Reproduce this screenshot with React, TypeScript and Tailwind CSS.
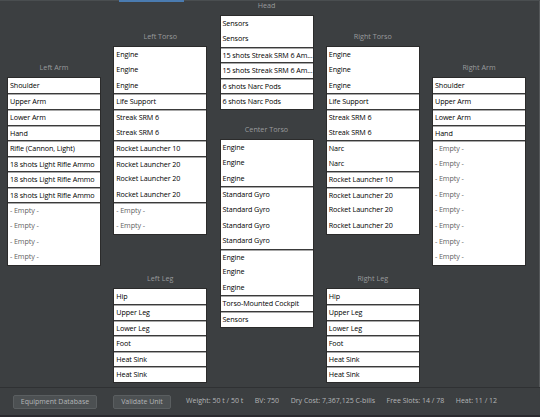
import React from "react";

type Groups = string[][];

const leftArm: Groups = [
  ["Shoulder"],
  ["Upper Arm"],
  ["Lower Arm"],
  ["Hand"],
  ["Rifle (Cannon, Light)"],
  ["18 shots Light Rifle Ammo"],
  ["18 shots Light Rifle Ammo"],
  ["18 shots Light Rifle Ammo"],
  ["- Empty -", "- Empty -", "- Empty -", "- Empty -"],
];

const leftTorso: Groups = [
  ["Engine", "Engine", "Engine"],
  ["Life Support"],
  ["Streak SRM 6", "Streak SRM 6"],
  ["Rocket Launcher 10"],
  ["Rocket Launcher 20", "Rocket Launcher 20", "Rocket Launcher 20"],
  ["- Empty -", "- Empty -"],
];

const head: Groups = [
  ["Sensors", "Sensors"],
  ["15 shots Streak SRM 6 Am..."],
  ["15 shots Streak SRM 6 Am..."],
  ["6 shots Narc Pods"],
  ["6 shots Narc Pods"],
];

const centerTorso: Groups = [
  ["Engine", "Engine", "Engine"],
  ["Standard Gyro", "Standard Gyro", "Standard Gyro", "Standard Gyro"],
  ["Engine", "Engine", "Engine"],
  ["Torso-Mounted Cockpit"],
  ["Sensors"],
];

const rightTorso: Groups = [
  ["Engine", "Engine", "Engine"],
  ["Life Support"],
  ["Streak SRM 6", "Streak SRM 6"],
  ["Narc", "Narc"],
  ["Rocket Launcher 10"],
  ["Rocket Launcher 20", "Rocket Launcher 20", "Rocket Launcher 20"],
];

const rightArm: Groups = [
  ["Shoulder"],
  ["Upper Arm"],
  ["Lower Arm"],
  ["Hand"],
  [
    "- Empty -",
    "- Empty -",
    "- Empty -",
    "- Empty -",
    "- Empty -",
    "- Empty -",
    "- Empty -",
    "- Empty -",
  ],
];

const leg: Groups = [
  ["Hip"],
  ["Upper Leg"],
  ["Lower Leg"],
  ["Foot"],
  ["Heat Sink"],
  ["Heat Sink"],
];

function Label({ text }: { text: string }) {
  return (
    <div className="h-[10px] leading-[10px] mb-[4.5px] text-center text-[7.2px] text-[#999b9d]">
      {text}
    </div>
  );
}

function Box({ groups }: { groups: Groups }) {
  return (
    <div className="w-[94px] bg-white border border-[#2b2b2b]">
      {groups.map((g, gi) =>
        g.map((item, ii) => {
          const sep = gi > 0 && ii === 0;
          const empty = item.startsWith("- Empty");
          return (
            <div
              key={gi + "-" + ii}
              className={
                "h-[15.58px] leading-[15px] pl-[2px] whitespace-nowrap overflow-hidden text-[7.2px] tracking-[-0.1px] " +
                (empty ? "text-[#636363] " : "text-[#000000] ") +
                (sep
                  ? "border-t border-[#3a3a3a] shadow-[inset_0_1px_0_#a8a8a8]"
                  : "")
              }
            >
              {item}
            </div>
          );
        })
      )}
    </div>
  );
}

function Part({ label, groups }: { label: string; groups: Groups }) {
  return (
    <div className="flex flex-col">
      <Label text={label} />
      <Box groups={groups} />
    </div>
  );
}

export default function App() {
  return (
    <div
      className="w-[540px] h-[417px] bg-[#3c3f41] flex flex-col overflow-hidden relative"
      style={{ fontFamily: '"Open Sans", "Noto Sans", sans-serif' }}
    >
      <div className="absolute top-0 left-0 w-[540px] h-[1px] bg-[#4a4e50]" />
      <div className="absolute top-0 left-[119px] w-[65px] h-[2px] bg-[#4a7bb0]" />
      <div className="h-[387px] flex border-r border-[#55585a]">
        <div className="flex pl-[7px] gap-[12.25px]">
          <div className="pt-[62.3px]">
            <Part label="Left Arm" groups={leftArm} />
          </div>
          <div className="pt-[31.2px] flex flex-col">
            <Part label="Left Torso" groups={leftTorso} />
            <div className="mt-[38.4px]">
              <Part label="Left Leg" groups={leg} />
            </div>
          </div>
          <div className="pt-[0px] flex flex-col">
            <Part label="Head" groups={head} />
            <div className="mt-[14.2px]">
              <Part label="Center Torso" groups={centerTorso} />
            </div>
          </div>
          <div className="pt-[31.2px] flex flex-col">
            <Part label="Right Torso" groups={rightTorso} />
            <div className="mt-[38.4px]">
              <Part label="Right Leg" groups={leg} />
            </div>
          </div>
          <div className="pt-[62.3px]">
            <Part label="Right Arm" groups={rightArm} />
          </div>
        </div>
      </div>
      <div className="h-[1px] bg-[#2f3133]" />
      <div className="flex-1 flex items-center pl-[13px] text-[7px] text-[#b4b6b8]">
        <button className="h-[14px] w-[84px] bg-[#4c5052] border border-[#5a5e60] rounded-[2px] text-[#b4b6b8] leading-[12px]">
          Equipment Database
        </button>
        <button className="ml-[16px] h-[14px] w-[58px] bg-[#4c5052] border border-[#5a5e60] rounded-[2px] text-[#b4b6b8] leading-[12px]">
          Validate Unit
        </button>
        <div className="ml-[15px] flex gap-[11.5px]">
          <span>Weight: 50 t / 50 t</span>
          <span>BV: 750</span>
          <span>Dry Cost: 7,367,125 C-bills</span>
          <span>Free Slots: 14 / 78</span>
          <span>Heat: 11 / 12</span>
        </div>
      </div>
      <div className="h-[2px] bg-[#2a2a2e]" />
    </div>
  );
}
